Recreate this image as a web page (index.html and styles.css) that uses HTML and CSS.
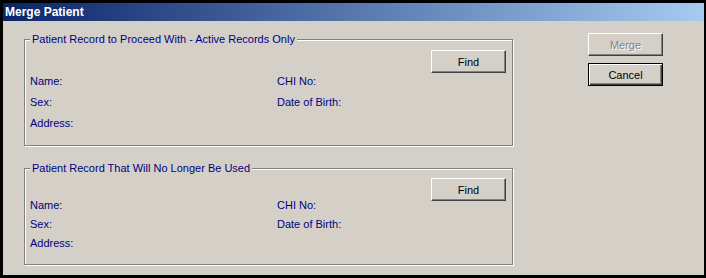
FILE: index.html
```html
<!DOCTYPE html>
<html>
<head>
<meta charset="utf-8">
<title>Merge Patient</title>
<link rel="stylesheet" href="styles.css">
</head>
<body>
<div class="window">
  <div class="titlebar">Merge Patient</div>
  <div class="client">
    <div class="groups">
      <section class="group group-first">
        <span class="legend">Patient Record to Proceed With - Active Records Only</span>
        <div class="find-row"><button class="btn">Find</button></div>
        <div class="fields">
          <span>Name:</span><span>CHI No:</span>
          <span>Sex:</span><span>Date of Birth:</span>
          <span>Address:</span><span></span>
        </div>
      </section>
      <section class="group group-second">
        <span class="legend">Patient Record That Will No Longer Be Used</span>
        <div class="find-row"><button class="btn">Find</button></div>
        <div class="fields">
          <span>Name:</span><span>CHI No:</span>
          <span>Sex:</span><span>Date of Birth:</span>
          <span>Address:</span><span></span>
        </div>
      </section>
    </div>
    <div class="actions">
      <button class="btn" disabled>Merge</button>
      <button class="btn btn-default">Cancel</button>
    </div>
  </div>
</div>
</body>
</html>
```

FILE: styles.css
```css
html, body {
  margin: 0;
  padding: 0;
}
body {
  width: 706px;
  height: 278px;
  background: #000;
  font-family: "Liberation Sans", Arial, sans-serif;
  font-size: 11px;
  overflow: hidden;
}
.window {
  box-sizing: border-box;
  width: 706px;
  height: 278px;
  border-style: solid;
  border-color: #000;
  border-width: 3px 2px 3px 3px;
  background: #d4d0c8;
  display: flex;
  flex-direction: column;
}
.titlebar {
  flex: none;
  height: 18px;
  line-height: 18px;
  padding-left: 2px;
  background: linear-gradient(to right, #0a246a, #a6caf0);
  color: #fff;
  font-weight: bold;
  font-size: 12px;
}
.client {
  flex: 1;
  display: flex;
  align-items: flex-start;
}
.groups {
  display: flex;
  flex-direction: column;
  gap: 22px;
  padding: 18px 0 0 21px;
}
.group {
  position: relative;
  box-sizing: border-box;
  width: 489px;
  border: 1px solid #808080;
  box-shadow: 1px 1px 0 #fff, inset 1px 1px 0 #fff;
  padding: 10px 6px 0 5px;
  color: #000080;
}
.group-first {
  height: 107px;
}
.group-second {
  height: 97px;
  padding-top: 9px;
}
.legend {
  position: absolute;
  left: 5px;
  top: -8px;
  padding: 0 2px 0 2px;
  line-height: 14px;
  background: #d4d0c8;
  color: #000080;
  white-space: nowrap;
}
.find-row {
  display: flex;
  justify-content: flex-end;
}
.fields {
  display: grid;
  grid-template-columns: 247px 1fr;
  line-height: 13px;
  margin-top: 2px;
  row-gap: 8px;
}
.group-second .fields {
  margin-top: -2px;
  row-gap: 6px;
}
.btn {
  box-sizing: border-box;
  width: 75px;
  height: 23px;
  padding: 0;
  margin: 0;
  font-family: "Liberation Sans", Arial, sans-serif;
  font-size: 11px;
  color: #000;
  background: #d4d0c8;
  border: 1px solid;
  border-color: #fff #404040 #404040 #fff;
  box-shadow: inset -1px -1px 0 #808080;
  border-radius: 0;
}
.btn:disabled {
  color: #808080;
  text-shadow: 1px 1px 0 #fff;
}
.btn-default {
  border-color: #000;
  box-shadow: inset 1px 1px 0 #fff, inset -1px -1px 0 #404040, inset -2px -2px 0 #808080;
}
.actions {
  display: flex;
  flex-direction: column;
  gap: 7px;
  margin-left: 75px;
  padding-top: 12px;
}
```
